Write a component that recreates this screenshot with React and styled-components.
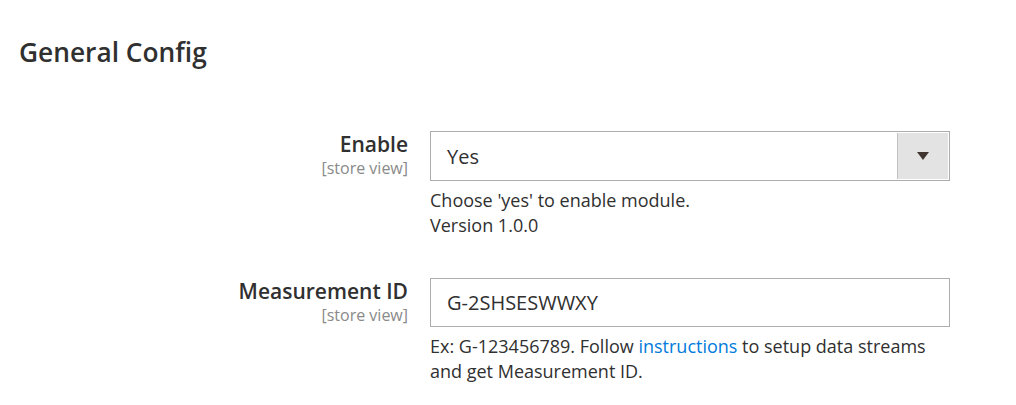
import React from "react";
import styled, { createGlobalStyle } from "styled-components";

const GlobalStyle = createGlobalStyle`
  html, body {
    margin: 0;
    padding: 0;
    background: #fff;
  }
  body {
    font-family: "Open Sans", "Liberation Sans", Arial, sans-serif;
    color: #303030;
  }
`;

const Page = styled.div`
  width: 1016px;
  height: 405px;
  overflow: hidden;
  background: #fff;
`;

const SectionTitle = styled.h2`
  margin: 0;
  padding: 34px 0 0 19px;
  font-size: 26.3px;
  line-height: 36px;
  font-weight: 600;
  color: #303030;
`;

const Fieldset = styled.div`
  display: flex;
  flex-direction: column;
  gap: 40px;
  padding-top: 61px;
`;

const Row = styled.div`
  display: grid;
  grid-template-columns: 408px 520px;
  column-gap: 22px;
`;

const LabelCell = styled.div`
  text-align: right;
`;

const LabelText = styled.div`
  font-size: 21px;
  line-height: 27px;
  font-weight: 600;
  color: #303030;
`;

const Scope = styled.div`
  font-size: 16px;
  line-height: 20px;
  color: #8a8a8a;
`;

const Control = styled.div`
  display: flex;
  flex-direction: column;
`;

const SelectBox = styled.div`
  display: flex;
  align-items: stretch;
  height: 50px;
  box-sizing: border-box;
  border: 1px solid #adadad;
  background: #fff;
`;

const SelectValue = styled.div`
  flex: 1;
  display: flex;
  align-items: center;
  padding-left: 16px;
  font-size: 20px;
  color: #303030;
`;

const SelectButton = styled.div`
  width: 50px;
  margin: 1px;
  background: #e3e3e3;
  border-left: 1px solid #c2c2c2;
  display: flex;
  align-items: center;
  justify-content: center;
`;

const Arrow = styled.span`
  width: 0;
  height: 0;
  border-left: 6px solid transparent;
  border-right: 6px solid transparent;
  border-top: 8px solid #41362f;
`;

const TextInput = styled.div`
  height: 49px;
  box-sizing: border-box;
  border: 1px solid #adadad;
  display: flex;
  align-items: center;
  padding-left: 16px;
  font-size: 20px;
  color: #303030;
`;

const Note = styled.div`
  margin-top: 7px;
  font-size: 18px;
  line-height: 25px;
  color: #303030;
`;

const Link = styled.a`
  color: #007bdb;
  text-decoration: none;
`;

export default function App() {
  return (
    <Page>
      <GlobalStyle />
      <SectionTitle>General Config</SectionTitle>
      <Fieldset>
        <Row>
          <LabelCell>
            <LabelText>Enable</LabelText>
            <Scope>[store view]</Scope>
          </LabelCell>
          <Control>
            <SelectBox>
              <SelectValue>Yes</SelectValue>
              <SelectButton>
                <Arrow />
              </SelectButton>
            </SelectBox>
            <Note>
              Choose 'yes' to enable module.
              <br />
              Version 1.0.0
            </Note>
          </Control>
        </Row>
        <Row>
          <LabelCell>
            <LabelText>Measurement ID</LabelText>
            <Scope>[store view]</Scope>
          </LabelCell>
          <Control>
            <TextInput>G-2SHSESWWXY</TextInput>
            <Note>
              Ex: G-123456789. Follow <Link href="#">instructions</Link> to setup data streams
              <br />
              and get Measurement ID.
            </Note>
          </Control>
        </Row>
      </Fieldset>
    </Page>
  );
}
